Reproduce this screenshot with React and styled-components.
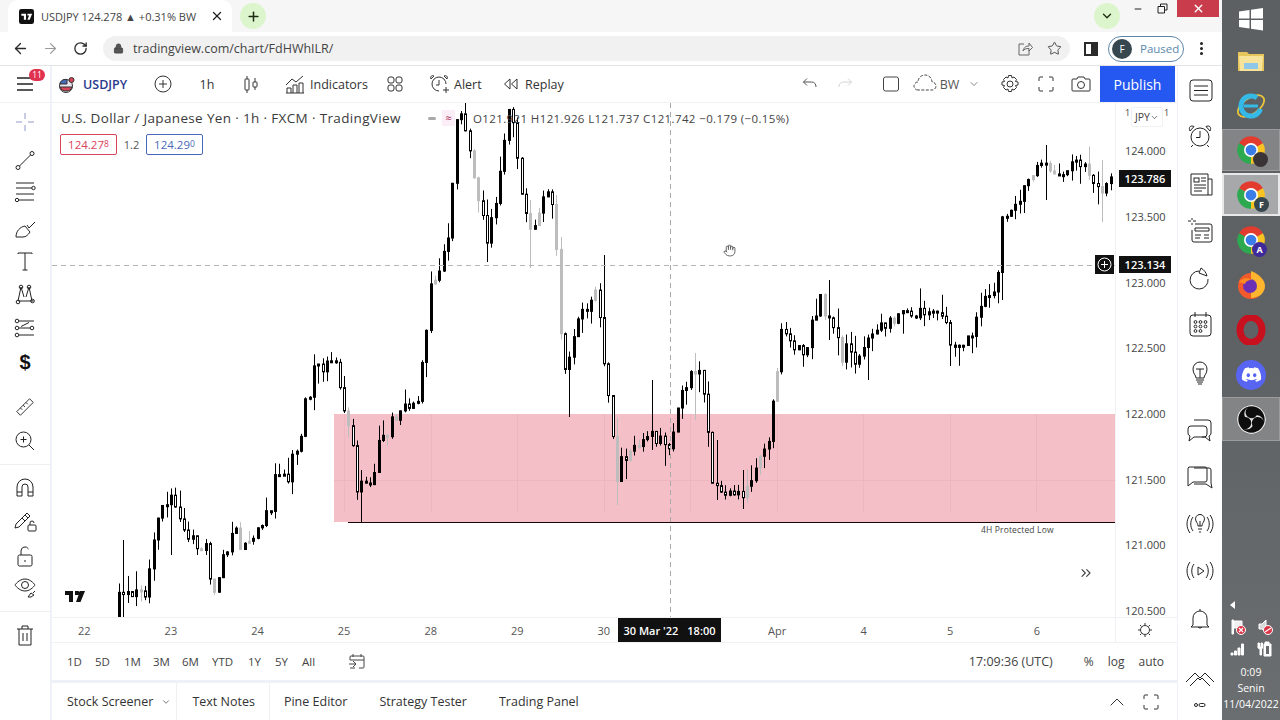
import React from 'react';
import styled, { createGlobalStyle } from 'styled-components';
import {
  ArrowLeft, ArrowRight, RotateCw, Lock, Plus, X, ChevronDown, ChevronUp, Star, Minus, ChevronsRight, Hand,
} from 'lucide-react';
import { FaDiscord } from 'react-icons/fa';
import { SiObsstudio } from 'react-icons/si';

const GlobalStyle = createGlobalStyle`
  html, body { margin: 0; padding: 0; width: 1280px; height: 720px; overflow: hidden; background: #fff; }
  body { font-family: "Open Sans", "Noto Sans", sans-serif; color: #2a2e39; }
  * { box-sizing: border-box; }
`;

const Screen = styled.div`
  display: flex;
  width: 1280px;
  height: 720px;
  overflow: hidden;
`;

const Browser = styled.div`
  width: 1222px;
  display: flex;
  flex-direction: column;
`;

/* chrome tab strip */
const TabStrip = styled.div`
  height: 32px;
  flex: none;
  background: #f6f6f6;
  display: flex;
  align-items: stretch;
  padding-left: 8px;
  position: relative;
`;

const Tab = styled.div`
  width: 224px;
  background: #fff;
  border-radius: 10px 10px 0 0;
  display: flex;
  align-items: center;
  padding-left: 11px;
  font-size: 11px;
  color: #444;
  white-space: nowrap;
`;

const Favicon = styled.svg`
  width: 15px;
  height: 15px;
  margin-right: 7px;
  flex: none;
`;

const TabClose = styled.span`
  margin-left: auto;
  margin-right: 8px;
  display: flex;
  color: #222;
`;

const Halo = styled.span`
  width: 26px;
  height: 26px;
  border-radius: 50%;
  background: #dcf5cc;
  color: #1c2b12;
  display: flex;
  align-items: center;
  justify-content: center;
  align-self: center;
  margin-left: ${(p) => p.$ml || 0}px;
`;

const WindowControls = styled.div`
  margin-left: auto;
  display: flex;
  align-items: flex-start;
  padding-right: 3px;
`;

const WinBtn = styled.span`
  width: ${(p) => p.$w}px;
  height: 17px;
  display: flex;
  align-items: center;
  justify-content: center;
  color: ${(p) => (p.$danger ? '#fff' : '#222')};
  background: ${(p) => (p.$danger ? '#c83c4c' : 'transparent')};
`;

/* address bar */
const AddressRow = styled.div`
  height: 34px;
  flex: none;
  display: flex;
  align-items: center;
  background: #fff;
  border-bottom: 1px solid #e4e4e4;
  padding-left: 5px;
`;

const NavBtn = styled.span`
  width: 30px;
  margin-left: ${(p) => p.$ml || 0}px;
  display: flex;
  justify-content: center;
  color: ${(p) => (p.$off ? '#9a9a9a' : '#2b2b2b')};
`;

const Omnibox = styled.div`
  width: 967px;
  height: 25px;
  margin-left: 8px;
  border-radius: 13px;
  background: #f1f1f1;
  display: flex;
  align-items: center;
  padding-left: 10px;
  font-size: 12.5px;
  color: #444;
  gap: 9px;
`;

const OmniIcons = styled.span`
  margin-left: auto;
  margin-right: 8px;
  display: flex;
  gap: 14px;
  align-items: center;
  color: #666;
`;

const Profile = styled.div`
  width: 76px;
  height: 26px;
  margin-left: 2px;
  border: 1px solid #5d86a8;
  border-radius: 13px;
  display: flex;
  align-items: center;
  padding-left: 3px;
  gap: 8px;
  font-size: 11.5px;
  color: #5a88ac;
`;

const Avatar = styled.span`
  width: 20px;
  height: 20px;
  border-radius: 50%;
  background: #37474f;
  color: #fff;
  font-size: 10px;
  display: flex;
  align-items: center;
  justify-content: center;
`;

const Dots = styled.span`
  margin-left: 9px;
  width: 16px;
  display: flex;
  flex-direction: column;
  align-items: center;
  gap: 2px;
  i { width: 3px; height: 3px; border-radius: 50%; background: #222; }
`;

/* tradingview */
const AppArea = styled.div`
  flex: 1;
  display: flex;
  min-height: 0;
  background: #eef1f8;
`;

const LeftColumn = styled.div`
  width: 50px;
  background: #fff;
  display: flex;
  flex-direction: column;
  align-items: center;
  margin-right: 2px;
  color: #222;
`;

const MenuCell = styled.div`
  width: 100%;
  height: 37px;
  flex: none;
  display: flex;
  align-items: center;
  justify-content: center;
  border-bottom: 1px solid #f0f1f4;
  position: relative;
`;

const Badge = styled.span`
  position: absolute;
  left: 29px;
  top: 3px;
  width: 16px;
  height: 12px;
  border-radius: 6px;
  background: #e0314f;
  color: #fff;
  font-size: 8.5px;
  line-height: 12px;
  text-align: center;
`;

const ToolSlot = styled.div`
  height: ${(p) => p.$h || 24}px;
  margin-top: ${(p) => p.$mt || 0}px;
  flex: none;
  width: 100%;
  display: flex;
  align-items: center;
  justify-content: center;
  color: ${(p) => p.$color || '#222'};
`;

const Dollar = styled.span`
  font-family: "Liberation Sans", sans-serif;
  font-size: 20px;
  font-weight: 700;
  color: #111;
`;

const ToolRule = styled.div`
  width: 100%;
  height: 1px;
  flex: none;
  margin-top: ${(p) => p.$mt || 0}px;
  background: #eceef2;
`;

const Glyph = styled.svg`
  width: ${(p) => p.$s || 24}px;
  height: ${(p) => p.$s || 24}px;
  fill: none;
  stroke: currentColor;
  stroke-width: ${(p) => p.$sw || 1};
  flex: none;
`;

const CenterColumn = styled.div`
  width: 1125px;
  display: flex;
  flex-direction: column;
`;

const Toolbar = styled.div`
  height: 37px;
  flex: none;
  background: #fff;
  border-bottom: 1px solid #f0f1f4;
  display: flex;
  align-items: stretch;
  font-size: 12.5px;
  color: #333;
`;

const Tool = styled.div`
  width: ${(p) => p.$w}px;
  margin-left: ${(p) => p.$ml || 0}px;
  padding-left: ${(p) => p.$pl ?? 0}px;
  display: flex;
  align-items: center;
  justify-content: ${(p) => (p.$pl === undefined ? 'center' : 'flex-start')};
  gap: ${(p) => p.$gap ?? 4}px;
  flex: none;
  white-space: nowrap;
  color: ${(p) => p.$color || 'inherit'};
`;

const Ticker = styled.span`
  font-weight: 600;
  color: #2a3a8c;
`;

const Spacer = styled.div`
  flex: 1;
`;

const Publish = styled.div`
  width: 75px;
  margin-left: 2px;
  margin-right: 2px;
  background: #2458f0;
  color: #fff;
  font-size: 14px;
  font-weight: 500;
  display: flex;
  align-items: center;
  justify-content: center;
`;

const ChartRow = styled.div`
  height: 514px;
  flex: none;
  display: flex;
  background: #fff;
`;

const Plot = styled.div`
  width: 1063px;
  position: relative;
  overflow: hidden;
`;

const ChartSvg = styled.svg`
  display: block;
  width: 1063px;
  height: 514px;
`;

const Legend = styled.div`
  position: absolute;
  left: 9px;
  top: 6px;
  display: flex;
  align-items: center;
  height: 18px;
  white-space: nowrap;
`;

const LegendTitle = styled.span`
  font-size: 13.5px;
  letter-spacing: 0.35px;
  color: #3a3a3a;
  width: 361px;
`;

const Ohlc = styled.span`
  font-size: 11.5px;
  letter-spacing: 0.38px;
  color: #444;
  margin-left: 18px;
`;

const DashChip = styled.i`
  width: 8px;
  height: 3px;
  border-radius: 2px;
  background: #aaa;
  margin-left: 6px;
`;

const PinkChip = styled.span`
  width: 13px;
  height: 16px;
  margin-left: 6px;
  background: #fbeef6;
  color: #a0224c;
  font-size: 11px;
  text-align: center;
  line-height: 16px;
`;

const Quotes = styled.div`
  position: absolute;
  left: 8px;
  top: 31px;
  display: flex;
  align-items: center;
  font-size: 11px;
  color: #555;
`;

const Quote = styled.span`
  width: 57px;
  height: 21px;
  border: 1px solid ${(p) => p.$c};
  border-radius: 2px;
  color: ${(p) => p.$c};
  display: flex;
  align-items: center;
  justify-content: center;
  font-size: 11.5px;
  sup { font-size: 8.5px; line-height: 0; position: relative; top: -1px; vertical-align: baseline; }
`;

const Spread = styled.span`
  width: 29px;
  text-align: center;
`;

const ZoneLabel = styled.span`
  position: absolute;
  left: 929px;
  top: 421px;
  font-size: 8.5px;
  letter-spacing: 0.15px;
  color: #444;
  white-space: nowrap;
`;

const HandCursor = styled.span`
  position: absolute;
  left: 671px;
  top: 141px;
  display: flex;
  color: #333;
`;

const ScrollEnd = styled.span`
  position: absolute;
  left: 1026px;
  top: 462px;
  display: flex;
  color: #444;
`;

const TvMark = styled.svg`
  position: absolute;
  left: 13px;
  top: 488px;
  width: 20px;
  height: 11px;
`;

const PlusMark = styled.span`
  position: absolute;
  left: 1043px;
  top: 152px;
  width: 19px;
  height: 19px;
  background: #111;
  color: #fff;
  display: flex;
  align-items: center;
  justify-content: center;
`;

const PriceAxis = styled.div`
  width: 62px;
  position: relative;
  border-left: 1px solid #f0f1f4;
  font-size: 11px;
  color: #444;
  padding-top: 15px;
`;

const Tick = styled.div`
  height: 65.7px;
  padding-left: 9px;
  display: flex;
  align-items: center;
`;

const PriceTag = styled.span`
  position: absolute;
  left: 3px;
  top: ${(p) => p.$top}px;
  width: 52px;
  height: 17px;
  background: #111;
  color: #fff;
  font-size: 11px;
  font-weight: 600;
  display: flex;
  align-items: center;
  justify-content: center;
`;

const PriceEdge = styled.span`
  position: absolute;
  left: ${(p) => p.$left}px;
  top: 5px;
  font-size: 9px;
  line-height: 10px;
`;

const CurrencyBtn = styled.span`
  position: absolute;
  left: 15px;
  top: 4px;
  width: 32px;
  height: 20px;
  background: #fff;
  border: 1px solid #f0f1f4;
  border-radius: 2px;
  display: flex;
  align-items: center;
  justify-content: center;
  font-size: 10.5px;
`;

const TimeAxis = styled.div`
  height: 26px;
  flex: none;
  display: flex;
  position: relative;
  background: #fff;
  border-top: 1px solid #f0f1f4;
  border-bottom: 1px solid #f0f1f4;
  font-size: 11px;
  color: #555;
`;

const Days = styled.div`
  width: 1063px;
  margin-left: -11px;
  display: flex;
  align-items: center;
`;

const Day = styled.span`
  width: 86.6px;
  flex: none;
  text-align: center;
`;

const AxisCorner = styled.div`
  position: absolute;
  right: 0;
  top: 0;
  bottom: 0;
  width: 62px;
  background: #fff;
  border-left: 1px solid #f0f1f4;
  display: flex;
  align-items: center;
  justify-content: center;
  padding-right: 3px;
  color: #333;
`;

const TimeTag = styled.span`
  position: absolute;
  left: 566px;
  top: 0;
  width: 103px;
  height: 24px;
  background: #111;
  color: #fff;
  font-size: 11px;
  font-weight: 600;
  display: flex;
  align-items: center;
  justify-content: center;
  gap: 9px;
`;

const RangeBar = styled.div`
  height: 37px;
  flex: none;
  background: #fff;
  display: flex;
  align-items: center;
  padding-left: 15px;
  font-size: 11.5px;
  color: #444;
`;

const RangeItem = styled.span`
  width: ${(p) => p.$w}px;
  flex: none;
`;

const RangeRight = styled.span`
  margin-left: auto;
  display: flex;
  align-items: center;
  font-size: 12px;
  color: #444;
  padding-right: 13px;
  gap: 14px;
`;

const Clock = styled.span`
  margin-right: 17px;
  font-size: 12.5px;
`;

const BottomTabs = styled.div`
  height: 37px;
  margin-top: 3px;
  flex: none;
  background: #fff;
  display: flex;
  align-items: stretch;
  font-size: 12.5px;
  color: #333;
`;

const BottomTab = styled.div`
  padding: 0 ${(p) => p.$pr ?? 15}px 0 ${(p) => p.$pl ?? 15}px;
  border-right: 1px solid ${(p) => (p.$plain ? 'transparent' : '#f0f1f4')};
  display: flex;
  align-items: center;
  gap: 8px;
  white-space: nowrap;
`;

const BottomIcons = styled.div`
  margin-left: auto;
  display: flex;
  align-items: center;
  gap: 14px;
  padding-right: 18px;
`;

const RightColumn = styled.div`
  width: 44px;
  margin-left: 1px;
  background: #fff;
  display: flex;
  flex-direction: column;
  align-items: center;
  color: #222;
  overflow: hidden;
`;

/* windows taskbar on the right */
const Taskbar = styled.div`
  width: 58px;
  background: linear-gradient(180deg, #5d6062 0%, #5f6264 50%, #6b6e70 100%);
  display: flex;
  flex-direction: column;
  align-items: stretch;
  color: #fff;
`;

const TaskItem = styled.div`
  height: ${(p) => p.$h}px;
  flex: none;
  display: flex;
  align-items: center;
  justify-content: center;
  position: relative;
  ${(p) => p.$active === 1 && 'background: #828486; border: 1px solid #9a9c9d;'}
  ${(p) => p.$active === 2 && 'background: #a6a8a9; border: 2px solid #e8e8e8;'}
`;

const Logo = styled.svg`
  width: ${(p) => p.$s || 30}px;
  height: ${(p) => p.$s || 30}px;
`;

const ChromeBadge = styled.span`
  position: absolute;
  left: 30px;
  top: 50%;
  margin-top: 2px;
  width: 15px;
  height: 15px;
  border-radius: 50%;
  background: ${(p) => p.$bg};
  color: #fff;
  font-size: 9px;
  font-weight: 700;
  display: flex;
  align-items: center;
  justify-content: center;
`;

const DiscordDisc = styled.span`
  width: 30px;
  height: 30px;
  border-radius: 50%;
  background: #5865f2;
  display: flex;
  align-items: center;
  justify-content: center;
  color: #fff;
`;

const ObsDisc = styled.span`
  width: 29px;
  height: 29px;
  border-radius: 50%;
  display: flex;
  color: #e4e4e4;
  background: #0e0e0e;
`;

const Tray = styled.div`
  margin-top: auto;
  display: flex;
  flex-direction: column;
  align-items: center;
  padding-bottom: 8px;
  font-size: 10.5px;
  line-height: 16px;
`;

const TrayCaret = styled.span`
  align-self: flex-start;
  margin-left: 8px;
  margin-bottom: 10px;
  width: 0;
  height: 0;
  border-top: 4px solid transparent;
  border-bottom: 4px solid transparent;
  border-right: 5px solid #fff;
`;

const TrayRow = styled.div`
  display: flex;
  justify-content: center;
  gap: 11px;
  margin-bottom: ${(p) => p.$mb || 4}px;
`;

/* chart data: path of the close price in page pixels */
const PATH = [
  [118, 617], [122, 590], [135, 592], [150, 585], [160, 520], [172, 495], [190, 535], [205, 550], [217, 590], [235, 532], [258, 542], [275, 490],
  [290, 462], [305, 440], [316, 368], [340, 365], [350, 420], [362, 480], [372, 490], [390, 420], [420, 405], [436, 290], [452, 240],
  [462, 95], [476, 170], [488, 240], [500, 195], [514, 100], [522, 175], [534, 245], [548, 185], [558, 215], [566, 375], [580, 325],
  [600, 290], [608, 370], [620, 465], [650, 435], [672, 445], [692, 365], [706, 380], [716, 490], [745, 495], [772, 440], [785, 330],
  [805, 355], [825, 295], [842, 340], [866, 355], [880, 325], [915, 312], [945, 315], [955, 345], [975, 340], [985, 300], [1000, 290],
  [1005, 215], [1020, 205], [1042, 160], [1062, 172], [1082, 160], [1096, 178], [1104, 190], [1115, 180],
];

const SPIKES = {
  122: [540, 617], 169: [490, 555], 359: [470, 522], 488: [200, 262], 530: [200, 268], 569: [360, 417], 602: [255, 345],
  615: [440, 505], 652: [380, 450], 693: [353, 420], 716: [440, 500], 743: [470, 509], 827: [280, 340], 865: [340, 380],
  950: [320, 366], 1002: [220, 300], 1043: [145, 200], 1103: [160, 222],
};

const priceAt = (x) => {
  for (let i = 1; i < PATH.length; i += 1) {
    if (x <= PATH[i][0]) {
      const [x0, y0] = PATH[i - 1];
      const [x1, y1] = PATH[i];
      return y0 + ((y1 - y0) * (x - x0)) / (x1 - x0);
    }
  }
  return PATH[PATH.length - 1][1];
};

const makeCandles = () => {
  let seed = 20220411;
  const rnd = () => {
    seed = (seed * 1664525 + 1013904223) % 4294967296;
    return seed / 4294967296;
  };
  const step = 4.33;
  const out = [];
  let prev = priceAt(118);
  for (let x = 118; x < 1113; x += step) {
    const swing = rnd() < 0.2 ? 44 : 12;
    const close = priceAt(x + step) + (rnd() - 0.5) * swing;
    const top = Math.min(prev, close);
    const bottom = Math.max(prev, close);
    let high = top - rnd() * rnd() * 22;
    let low = bottom + rnd() * rnd() * 22;
    const key = Object.keys(SPIKES).find((k) => Math.abs(k - x) <= step / 2);
    if (key) {
      high = Math.min(high, SPIKES[key][0]);
      low = Math.max(low, SPIKES[key][1]);
    }
    const up = close < prev;
    const r = rnd();
    const fill = up ? (r < 0.1 ? '#bdbdbd' : '#000') : r < 0.3 ? '#bdbdbd' : '#fff';
    out.push({ x: Math.round(x), top, bottom: Math.max(bottom, top + 2), high, low, fill, stroke: fill === '#bdbdbd' ? '#bdbdbd' : '#000' });
    prev = close;
  }
  return out;
};

const CANDLES = makeCandles();
const GRID_X = [344, 431, 517, 604, 690, 777, 863, 950, 1036];
const GRID_Y = [480];

const Chart = () => (
  <ChartSvg viewBox="52 103 1063 514">
    <rect x="334" y="414" width="781" height="108" fill="#f5bfc8" />
    {GRID_X.map((x) => <line key={x} x1={x + 0.5} x2={x + 0.5} y1="414" y2="512" stroke="#f0b6c0" />)}
    {GRID_Y.map((y) => <line key={y} x1="334" x2="1115" y1={y + 0.5} y2={y + 0.5} stroke="#f0b6c0" />)}
    {CANDLES.map((c) => (
      <g key={c.x}>
        <line x1={c.x + 1.5} x2={c.x + 1.5} y1={c.high} y2={c.low} stroke={c.stroke} />
        <rect x={c.x + 0.5} y={c.top} width="2" height={c.bottom - c.top} fill={c.fill} stroke={c.stroke} />
      </g>
    ))}
    <line x1="348" x2="1115" y1="522.5" y2="522.5" stroke="#1a0508" />
    <line x1="670.5" x2="670.5" y1="103" y2="617" stroke="#a8a8a8" strokeDasharray="5 4" />
    <line x1="52" x2="1115" y1="265.5" y2="265.5" stroke="#b4b4b4" strokeDasharray="5 4" />
  </ChartSvg>
);

const CHROME_SLICES = [
  ['#e33b2e', 'M12 12 L2.47 6.5 A11 11 0 0 1 21.53 6.5 Z'],
  ['#f9c421', 'M12 12 L21.53 6.5 A11 11 0 0 1 12 23 Z'],
  ['#2da94f', 'M12 12 L12 23 A11 11 0 0 1 2.47 6.5 Z'],
];

const ChromeLogo = () => (
  <Logo viewBox="0 0 24 24">
    {CHROME_SLICES.map(([c, d]) => <path key={c} d={d} fill={c} />)}
    <circle cx="12" cy="12" r="5.6" fill="#fff" />
    <circle cx="12" cy="12" r="4.3" fill="#3b7de8" />
  </Logo>
);

const TvFavicon = () => (
  <Favicon viewBox="0 0 16 16">
    <rect width="16" height="16" rx="2.5" fill="#111" />
    <path d="M2.500 5h5v6.500H5.200V7.200H2.500zM9 5h1.700a1 1 0 1 1 0 2H9zM11.500 5h2.500l-2.600 6.500H9z" fill="#fff" />
  </Favicon>
);

const UPPER_TOOLS = [
  { mt: 7, color: '#8f9ac6', icon: <path d="M12 3v6M12 15v6M3 12h6M15 12h6" /> },
  { mt: 14, icon: <><path d="M6.500 18 17.500 7" /><circle cx="5" cy="19.500" r="2" /><circle cx="19" cy="5.500" r="2" /></> },
  { mt: 8, icon: <><path d="M3 3h18M3 8h16M3 14h18M6 20h15" /><circle cx="20.500" cy="8" r="1.700" /><circle cx="4" cy="20" r="1.700" /></> },
  { mt: 12, icon: <path d="M3 21c0-6 4-10 9-11l5 6c-2 3-4 5-7 5zM14 9l2 3 6-6" /> },
  { mt: 9, icon: <path d="M5 5V4h14v1M12 4v17M9.500 21h5" /> },
  { mt: 9, icon: <><path d="M5 19 8 5M8 5l3 10M16 5l3 14M16 5l-3 10M5.500 19l15 0" /><circle cx="8" cy="5" r="1.800" /><circle cx="16" cy="5" r="1.800" /><circle cx="5" cy="20" r="1.800" /><circle cx="19.500" cy="19" r="1.800" /></> },
  { mt: 10, icon: <><path d="M6 5h15M6 12h11M6 19h15M8 10.500l8-4" /><circle cx="4" cy="5" r="1.800" /><circle cx="4" cy="12" r="1.800" /><circle cx="19" cy="12" r="1.800" /><circle cx="4" cy="19" r="1.800" /></> },
];

const LOCK_TOOLS = [
  { mt: 10, icon: <path d="M4 21v-9a8 8 0 0 1 16 0v9h-5v-9a3 3 0 0 0-6 0v9zM4 17h5M15 17h5" /> },
  { mt: 10, icon: <><path d="M3 15 14 4l3 3-11 11-4 1zM12 6l3 3M9 9l3 3" /><rect x="15" y="16" width="8" height="6" rx="1" /><path d="M17 16v-2a2 2 0 0 1 4 0" /></> },
  { mt: 11, icon: <><rect x="5" y="11" width="14" height="11" rx="1.500" /><path d="M8 11V7a4 4 0 0 1 7.500-2M12 16v2" /></> },
  { mt: 7, icon: <><path d="M2 10s4-6 10-6 10 6 10 6-4 6-10 6-10-6-10-6z" /><circle cx="12" cy="10" r="3.500" /><path d="M15 22l3-4 3 2-3 2zM20 18l2-2" /></> },
];

const RIGHT_TOOLS = [
  { mt: 9, s: 26, icon: <><rect x="3" y="3" width="22" height="21" rx="3" /><path d="M7 9h14M7 13.500h14M7 18h14" /></> },
  { mt: 16, s: 26, icon: <><circle cx="13" cy="14" r="9" /><path d="M13 8v6.500H9M3 8l4-4.500M23 8l-4-4.500M6 22l-2 2M20 22l2 2M3 8c-2-4 1-6 4-4.500M23 8c2-4-1-6-4-4.500" /></> },
  { mt: 18, s: 26, icon: <><path d="M21 21V3H4v20a1 1 0 0 0 1 1h20V8h-4M21 21v3" /><rect x="7" y="7" width="5" height="4" /><path d="M14 7h5M14 10h5M7 14h12M7 17h12M7 20h8" /></> },
  { mt: 17, s: 26, icon: <><path d="M8 6h15a2 2 0 0 1 2 2v14a2 2 0 0 1-2 2H7a2 2 0 0 1-2-2V12M8 10h14v3H8zM8 17h6M8 20h5M17 17h5M17 20h5" /><path d="M1 3h3M6 3h3M5 0v2M5 5v2" /></> },
  { mt: 18, s: 26, icon: <path d="M12 5a9 9 0 1 0 9 8M14 2l-2 5 8 3c-1-4-3-6-6-8z" /> },
  { mt: 15, s: 26, icon: <><rect x="3" y="4" width="21" height="21" rx="3" /><path d="M8 1v5M19 1v5" /><circle cx="8.500" cy="11" r="1.400" /><circle cx="13.500" cy="11" r="1.400" /><circle cx="18.500" cy="11" r="1.400" /><circle cx="8.500" cy="15.500" r="1.400" /><circle cx="13.500" cy="15.500" r="1.400" /><circle cx="18.500" cy="15.500" r="1.400" /><circle cx="8.500" cy="20" r="1.400" /><circle cx="13.500" cy="20" r="1.400" /></> },
  { mt: 18, s: 26, icon: <path d="M9 19c0-3-3-4-3-9a7 7 0 0 1 14 0c0 5-3 6-3 9zM9 21h8M10 23h6M11 25h4M9 10h8M13 10v9" /> },
  { mt: 29, s: 28, icon: <path d="M8 3h14a3 3 0 0 1 3 3v10a3 3 0 0 1-2 3l1 5-5-4H16M5 9h13a3 3 0 0 1 3 3v5a3 3 0 0 1-3 3H8l-5 4 1-5a3 3 0 0 1-2-3v-4a3 3 0 0 1 3-3z" /> },
  { mt: 17, s: 28, icon: <path d="M8 4h15a2 2 0 0 1 2 2v13l1 5-6-4H8M3 3h16a2 2 0 0 1 2 2v11a2 2 0 0 1-2 2H7l-5 4V4z" /> },
  { mt: 16, s: 30, icon: <><path d="M5 6C1 11 1 19 5 24M8 8c-3 4-3 10 0 14M25 6c4 5 4 13 0 18M22 8c3 4 3 10 0 14" /><path d="M11 12a4.500 4.500 0 1 1 8 0c-1 2-2 3-2 5h-4c0-2-1-3-2-5zM13 20h4M14 23h2M15 12v5" /></> },
  { mt: 17, s: 30, icon: <><path d="M5 6C1 11 1 19 5 24M9 8c-3 4-3 10 0 14M25 6c4 5 4 13 0 18M21 8c3 4 3 10 0 14" /><path d="M13 11l6 4-6 4z" /></> },
  { mt: 18, s: 26, icon: <path d="M6 19v-7a7 7 0 0 1 14 0v7l2 2H4zM11 21a2.500 2.500 0 0 0 4 0M13 5V3" /> },
  { mt: 31, s: 30, icon: <path d="M1 17 10 8l5 5 5-5 9 9M5 21l8-8 2 2 2-2 8 8" /> },
];

const TRAY_CROSS = <path d="M9 9l4 4M13 9l-4 4" stroke="#fff" strokeWidth="1.200" />;

const App = () => (
  <Screen>
    <GlobalStyle />
    <Browser>
      <TabStrip>
        <Tab>
          <TvFavicon />
          USDJPY 124.278 ▲ +0.31% BW
          <TabClose><X size={14} strokeWidth={2.2} /></TabClose>
        </Tab>
        <Halo $ml={8}><Plus size={15} strokeWidth={2.4} /></Halo>
        <WindowControls>
          <Halo><ChevronDown size={14} strokeWidth={2.2} /></Halo>
          <WinBtn $w={36}><Minus size={10} strokeWidth={2.4} /></WinBtn>
          <WinBtn $w={13}>
            <Glyph $s={11} viewBox="0 0 11 11"><path d="M1 3.500h6.500V10H1zM3.500 3.500V1H10v6H7.500" /></Glyph>
          </WinBtn>
          <WinBtn $w={8} />
          <WinBtn $w={42} $danger><X size={13} strokeWidth={2.6} /></WinBtn>
        </WindowControls>
      </TabStrip>
      <AddressRow>
        <NavBtn><ArrowLeft size={17} strokeWidth={1.9} /></NavBtn>
        <NavBtn $off><ArrowRight size={17} strokeWidth={1.6} /></NavBtn>
        <NavBtn><RotateCw size={15} strokeWidth={2.1} /></NavBtn>
        <Omnibox>
          <Lock size={11} fill="#555" strokeWidth={1.8} />
          tradingview.com/chart/FdHWhILR/
          <OmniIcons>
            <Glyph $s={16} viewBox="0 0 16 16"><path d="M7 3H2v11h10V9M6 10c1-4 3-5 6-5V2l3.500 4.500L12 10V7.500c-3 0-5 .500-6 2.500z" /></Glyph>
            <Star size={15} strokeWidth={1.5} color="#444" />
          </OmniIcons>
        </Omnibox>
        <NavBtn $ml={6}>
          <Glyph $s={14} $sw={2} viewBox="0 0 14 14"><rect x="1" y="1" width="12" height="12" /><rect x="8" y="1" width="5" height="12" fill="currentColor" /></Glyph>
        </NavBtn>
        <Profile>
          <Avatar>F</Avatar>
          Paused
        </Profile>
        <Dots><i /><i /><i /></Dots>
      </AddressRow>
      <AppArea>
        <LeftColumn>
          <MenuCell>
            <Glyph $s={20} $sw={1.4} viewBox="0 0 20 20"><path d="M2 4h16M2 10h16M2 16h16" /></Glyph>
            <Badge>11</Badge>
          </MenuCell>
          {UPPER_TOOLS.map((t, i) => (
            <ToolSlot key={i} $mt={t.mt} $color={t.color}>
              <Glyph viewBox="0 0 24 24">{t.icon}</Glyph>
            </ToolSlot>
          ))}
          <ToolSlot $mt={10}><Dollar>$</Dollar></ToolSlot>
          <ToolSlot $mt={21}>
            <Glyph $s={22} viewBox="0 0 24 24"><path d="M3 17 17 3l4 4L7 21zM7 13l2 2M10 10l2 2M13 7l2 2" /></Glyph>
          </ToolSlot>
          <ToolSlot $mt={10}>
            <Glyph viewBox="0 0 24 24"><circle cx="10.500" cy="10.500" r="7.500" /><path d="M16 16l5 5M10.500 7.500v6M7.500 10.500h6" /></Glyph>
          </ToolSlot>
          <ToolRule $mt={11} />
          {LOCK_TOOLS.map((t, i) => (
            <ToolSlot key={i} $mt={t.mt}><Glyph viewBox="0 0 24 24">{t.icon}</Glyph></ToolSlot>
          ))}
          <ToolRule $mt={12} />
          <ToolSlot $mt={11}>
            <Glyph viewBox="0 0 24 24"><path d="M4 6h16M9 6V3h6v3M6 6v16h12V6M10 10v8M14 10v8" /></Glyph>
          </ToolSlot>
        </LeftColumn>
        <CenterColumn>
          <Toolbar>
            <Tool $w={93} $pl={6} $gap={8}>
              <Glyph $s={17} $sw={0} viewBox="0 0 17 17">
                <circle cx="8" cy="10" r="6.500" fill="#e6e6ee" />
                <path d="M2 11h12c-1 3-3 4-6 4s-5-1-6-4z" fill="#d9435a" />
                <path d="M2 7a6.500 6.500 0 0 1 7-3.500V8H2z" fill="#4a6ab8" />
                <circle cx="13.500" cy="4" r="2.500" fill="#d9435a" />
              </Glyph>
              <Ticker>USDJPY</Ticker>
            </Tool>
            <Tool $w={36}>
              <Glyph $s={18} viewBox="0 0 18 18"><circle cx="9" cy="9" r="8" /><path d="M9 5v8M5 9h8" /></Glyph>
            </Tool>
            <Tool $w={52}>1h</Tool>
            <Tool $w={36}>
              <Glyph $s={18} viewBox="0 0 18 18"><path d="M5 1v3M5 15v3M13 3v4M13 12v3" /><rect x="3" y="4" width="4" height="11" rx=".5" /><rect x="11" y="7" width="4" height="5" rx=".5" /></Glyph>
            </Tool>
            <Tool $w={112} $pl={16} $gap={5}>
              <Glyph $s={20} viewBox="0 0 20 20"><path d="M1 11 7 5l4 3 7-6M2 19v-5h4v5M8 19v-8h4v8M14 19V9h4v10M1 19h18" /></Glyph>
              Indicators
            </Tool>
            <Tool $w={28}>
              <Glyph $s={18} viewBox="0 0 18 18"><rect x="2" y="2" width="6" height="6" rx="2" /><rect x="10" y="2" width="6" height="6" rx="2" /><rect x="2" y="10" width="6" height="6" rx="2" /><rect x="10" y="10" width="6" height="6" rx="2" /></Glyph>
            </Tool>
            <Tool $w={84} $pl={21} $gap={4}>
              <Glyph $s={20} viewBox="0 0 20 20"><path d="M9 17a7 7 0 1 1 7-7M9 6v5H6M1 5l3-3M17 5l-3-3M1 5c-1-3 1-4 3-3M17 5c1-3-1-4-3-3M16 13v6M13 16h6" /></Glyph>
              Alert
            </Tool>
            <Tool $w={90} $pl={10} $gap={6}>
              <Glyph $s={16} viewBox="0 0 16 16"><path d="M7 3 1.500 8 7 13zM14 3 8.500 8 14 13z" /></Glyph>
              Replay
            </Tool>
            <Spacer />
            <Tool $w={36} $color="#555">
              <Glyph $s={16} viewBox="0 0 16 16"><path d="M1.500 6h8c3 0 4.500 2 4.500 5M1.500 6 5 2.500M1.500 6 5 9.500" /></Glyph>
            </Tool>
            <Tool $w={34} $color="#d4d4d4">
              <Glyph $s={16} viewBox="0 0 16 16"><path d="M14.500 6h-8C3.500 6 2 8 2 11M14.500 6 11 2.500M14.500 6 11 9.500" /></Glyph>
            </Tool>
            <Tool $w={46} $ml={6} $color="#444">
              <Glyph $s={18} viewBox="0 0 18 18"><rect x="1.500" y="2" width="15" height="14" rx="2" /></Glyph>
            </Tool>
            <Tool $w={22} $color="#444">
              <Glyph $s={24} viewBox="0 0 24 24" strokeDasharray="3 1.500"><path d="M5 18a4 4 0 0 1 0-8 7 7 0 0 1 14 0 4 4 0 0 1 0 8z" /></Glyph>
            </Tool>
            <Tool $w={27} $color="#555">BW</Tool>
            <Tool $w={22} $color="#555"><ChevronDown size={12} strokeWidth={1.4} /></Tool>
            <Tool $w={36} $ml={7} $color="#333">
              <Glyph $s={20} viewBox="0 0 20 20"><circle cx="10" cy="10" r="3" /><path d="M8.500 1.500h3l.5 2.500 2-1 2.500 2.500-1 2 2.500.5v3l-2.500.5 1 2-2.500 2.500-2-1-.5 2.500h-3l-.5-2.500-2 1-2.500-2.500 1-2-2.500-.5v-3l2.500-.5-1-2L6 3l2 1z" /></Glyph>
            </Tool>
            <Tool $w={35} $color="#333">
              <Glyph $s={18} viewBox="0 0 18 18"><path d="M2 6V3a1 1 0 0 1 1-1h3M12 2h3a1 1 0 0 1 1 1v3M16 12v3a1 1 0 0 1-1 1h-3M6 16H3a1 1 0 0 1-1-1v-3" /></Glyph>
            </Tool>
            <Tool $w={35} $color="#333">
              <Glyph $s={20} viewBox="0 0 20 20"><path d="M1 6a1 1 0 0 1 1-1h4l1-2h6l1 2h4a1 1 0 0 1 1 1v10a1 1 0 0 1-1 1H2a1 1 0 0 1-1-1z" /><circle cx="10" cy="11" r="3.500" /></Glyph>
            </Tool>
            <Publish>Publish</Publish>
          </Toolbar>
          <ChartRow>
            <Plot>
              <Chart />
              <Legend>
                <LegendTitle>U.S. Dollar / Japanese Yen · 1h · FXCM · TradingView</LegendTitle>
                <DashChip />
                <PinkChip>≈</PinkChip>
                <Ohlc>O121.921 H121.926 L121.737 C121.742 −0.179 (−0.15%)</Ohlc>
              </Legend>
              <Quotes>
                <Quote $c="#d9435a">124.27<sup>8</sup></Quote>
                <Spread>1.2</Spread>
                <Quote $c="#4a6ab8">124.29<sup>0</sup></Quote>
              </Quotes>
              <ZoneLabel>4H Protected Low</ZoneLabel>
              <HandCursor><Hand size={13} strokeWidth={1.4} /></HandCursor>
              <ScrollEnd><ChevronsRight size={16} strokeWidth={1.7} /></ScrollEnd>
              <TvMark viewBox="0 0 20 11">
                <path d="M0 0h8v11H4V4H0zM10 0h3a2 2 0 1 1 0 4h-3zM15 0h5l-4.500 11H11z" fill="#111" />
              </TvMark>
              <PlusMark>
                <Glyph $s={15} viewBox="0 0 15 15"><circle cx="7.500" cy="7.500" r="6.500" /><path d="M7.500 4v7M4 7.500h7" /></Glyph>
              </PlusMark>
            </Plot>
            <PriceAxis>
              <Tick>124.000</Tick>
              <Tick>123.500</Tick>
              <Tick>123.000</Tick>
              <Tick>122.500</Tick>
              <Tick>122.000</Tick>
              <Tick>121.500</Tick>
              <Tick>121.000</Tick>
              <Tick>120.500</Tick>
              <PriceEdge $left={9}>1</PriceEdge>
              <CurrencyBtn>JPY<ChevronDown size={9} strokeWidth={2} /></CurrencyBtn>
              <PriceEdge $left={48}>1</PriceEdge>
              <PriceTag $top={67}>123.786</PriceTag>
              <PriceTag $top={153}>123.134</PriceTag>
            </PriceAxis>
          </ChartRow>
          <TimeAxis>
            <Days>
              {['22', '23', '24', '25', '28', '29', '30', '', 'Apr', '4', '5', '6'].map((d, i) => <Day key={i}>{d}</Day>)}
            </Days>
            <TimeTag><span>30 Mar '22</span><span>18:00</span></TimeTag>
            <AxisCorner>
              <Glyph $s={16} viewBox="0 0 16 16"><circle cx="8" cy="8" r="4.500" /><path d="M8 1v2M8 13v2M1 8h2M13 8h2M3 3l1.500 1.500M13 3l-1.500 1.500M3 13l1.500-1.500M13 13l-1.500-1.500" /></Glyph>
            </AxisCorner>
          </TimeAxis>
          <RangeBar>
            <RangeItem $w={28}>1D</RangeItem>
            <RangeItem $w={29}>5D</RangeItem>
            <RangeItem $w={29}>1M</RangeItem>
            <RangeItem $w={29}>3M</RangeItem>
            <RangeItem $w={30}>6M</RangeItem>
            <RangeItem $w={36}>YTD</RangeItem>
            <RangeItem $w={27}>1Y</RangeItem>
            <RangeItem $w={27}>5Y</RangeItem>
            <RangeItem $w={46}>All</RangeItem>
            <Glyph $s={18} viewBox="0 0 18 18"><path d="M2 7V4a1 1 0 0 1 1-1h12a1 1 0 0 1 1 1v10a1 1 0 0 1-1 1h-4M2 7h14M5 1v3M13 1v3M1 11h7M5 8l3 3-3 3M2 15h5" /></Glyph>
            <RangeRight>
              <Clock>17:09:36 (UTC)</Clock>
              <span>%</span>
              <span>log</span>
              <span>auto</span>
            </RangeRight>
          </RangeBar>
          <BottomTabs>
            <BottomTab $pr={5}>Stock Screener<ChevronDown size={10} strokeWidth={1.6} /></BottomTab>
            <BottomTab $pr={14}>Text Notes</BottomTab>
            <BottomTab $pl={14} $plain>Pine Editor</BottomTab>
            <BottomTab $pl={16} $pr={16} $plain>Strategy Tester</BottomTab>
            <BottomTab $pl={15} $plain>Trading Panel</BottomTab>
            <BottomIcons>
              <ChevronUp size={24} strokeWidth={1} />
              <Glyph $s={16} viewBox="0 0 16 16"><path d="M1 5V2a1 1 0 0 1 1-1h3M11 1h3a1 1 0 0 1 1 1v3M15 11v3a1 1 0 0 1-1 1h-3M5 15H2a1 1 0 0 1-1-1v-3" /></Glyph>
            </BottomIcons>
          </BottomTabs>
        </CenterColumn>
        <RightColumn>
          {RIGHT_TOOLS.map((t, i) => (
            <ToolSlot key={i} $h={30} $mt={t.mt}>
              <Glyph $s={t.s} viewBox={`0 0 ${t.s} ${t.s}`}>{t.icon}</Glyph>
            </ToolSlot>
          ))}
          <ToolSlot $h={6} $mt={7}>
            <Glyph $s={14} viewBox="0 0 14 6"><circle cx="3" cy="3" r="1.500" /><rect x="6" y="1.500" width="6" height="3" rx="1.500" /></Glyph>
          </ToolSlot>
        </RightColumn>
      </AppArea>
    </Browser>
    <Taskbar>
      <TaskItem $h={38}>
        <Logo $s={26} viewBox="0 0 26 26">
          <path d="M1 5.500 11.500 4v8.500H1zM13 3.800 25 2v10.500H13zM1 14h10.500v8.500L1 21zM13 14h12v10.500L13 22.700z" fill="#fff" />
        </Logo>
      </TaskItem>
      <TaskItem $h={44}>
        <Logo viewBox="0 0 30 30">
          <path d="M2 7h9l2 2h15v17H2z" fill="#e6c55a" />
          <path d="M3 11h24l-1 15H4z" fill="#f7e39a" />
          <rect x="8" y="18" width="14" height="6" fill="#8fc7e8" />
        </Logo>
      </TaskItem>
      <TaskItem $h={47}>
        <Logo viewBox="0 0 30 30">
          <ellipse cx="15" cy="15" rx="15" ry="8" transform="rotate(-35 15 15)" fill="none" stroke="#e8c53a" strokeWidth="1.800" />
          <circle cx="15" cy="15" r="10" fill="none" stroke="#35b9e6" strokeWidth="5" strokeDasharray="50 13" transform="rotate(18 15 15)" />
          <rect x="8" y="13.500" width="14" height="3" fill="#35b9e6" />
        </Logo>
      </TaskItem>
      <TaskItem $active={1} $h={42}>
        <ChromeLogo />
        <ChromeBadge $bg="#3a3437" />
      </TaskItem>
      <TaskItem $h={2} />
      <TaskItem $active={2} $h={43}>
        <ChromeLogo />
        <ChromeBadge $bg="#37474f">F</ChromeBadge>
      </TaskItem>
      <TaskItem $h={47}>
        <ChromeLogo />
        <ChromeBadge $bg="#3f2a9c">A</ChromeBadge>
      </TaskItem>
      <TaskItem $h={44}>
        <Logo viewBox="0 0 30 30">
          <circle cx="15" cy="16" r="13" fill="#f25a2b" />
          <path d="M15 1c8 3 14 9 14 15 0 7-6 12-14 12" fill="#ffb52e" />
          <circle cx="14" cy="16" r="7" fill="#6b2fb5" />
          <path d="M3 12c3-4 9-5 13-2-4 0-6 1-7 4z" fill="#ff8a1f" />
        </Logo>
      </TaskItem>
      <TaskItem $h={45}>
        <Logo viewBox="0 0 30 30">
          <ellipse cx="15" cy="15" rx="11" ry="12.500" fill="none" stroke="#c8101f" strokeWidth="7" />
        </Logo>
      </TaskItem>
      <TaskItem $h={45}>
        <DiscordDisc><FaDiscord size={21} /></DiscordDisc>
      </TaskItem>
      <TaskItem $active={1} $h={44}>
        <ObsDisc><SiObsstudio size={29} /></ObsDisc>
      </TaskItem>
      <Tray>
        <TrayCaret />
        <TrayRow $mb={6}>
          <Glyph $s={16} $sw={0} viewBox="0 0 16 16">
            <path d="M2 1h1.500v14H2zM4 2h8v7H4z" fill="#f0f0f0" />
            <circle cx="11" cy="11" r="4.500" fill="#d9364a" />
            {TRAY_CROSS}
          </Glyph>
          <Glyph $s={16} $sw={0} viewBox="0 0 16 16">
            <path d="M2 5h3l4-4v12L5 10H2z" fill="#d8d8d8" />
            <circle cx="11" cy="11" r="4.500" fill="#d9364a" />
            <path d="M8 13l6-4" stroke="#fff" strokeWidth="1.200" />
          </Glyph>
        </TrayRow>
        <TrayRow $mb={7}>
          <Glyph $s={16} $sw={0} viewBox="0 0 16 16">
            <path d="M1 12h2v2H1zM4.500 10h2v4h-2zM8 7h2v7H8zM11.500 3h2v11h-2z" fill="#fff" />
          </Glyph>
          <Glyph $s={16} $sw={0} viewBox="0 0 16 16">
            <path d="M1 2h1.500v4H4V2h1.500v5l-1 1v6H3V8L1 7zM7 3h1V1h4v2h2v12H7zM8.500 4.500v9h4v-9z" fill="#fff" />
          </Glyph>
        </TrayRow>
        <span>0:09</span>
        <span>Senin</span>
        <span>11/04/2022</span>
      </Tray>
    </Taskbar>
  </Screen>
);

export default App;
